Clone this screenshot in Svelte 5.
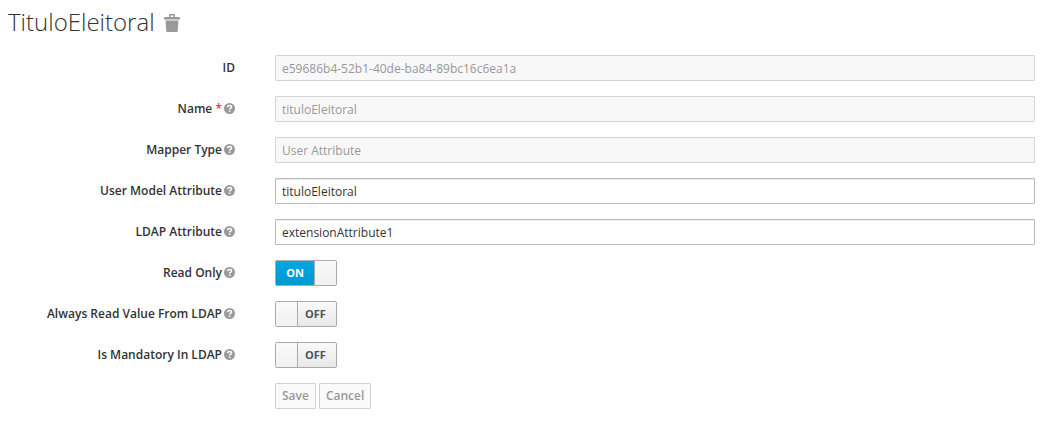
<script>
  const fields = [
    { id: 'mapper-id', label: 'ID', value: 'e59686b4-52b1-40de-ba84-89bc16c6ea1a', disabled: true },
    { id: 'name', label: 'Name', value: 'tituloEleitoral', disabled: true, required: true, help: true },
    { id: 'type', label: 'Mapper Type', value: 'User Attribute', disabled: true, help: true },
    { id: 'user-attribute', label: 'User Model Attribute', value: 'tituloEleitoral', help: true },
    { id: 'ldap-attribute', label: 'LDAP Attribute', value: 'extensionAttribute1', help: true }
  ];

  let switches = $state([
    { id: 'read-only', label: 'Read Only', on: true },
    { id: 'always-read', label: 'Always Read Value From LDAP', on: false },
    { id: 'mandatory', label: 'Is Mandatory In LDAP', on: false }
  ]);
</script>

{#snippet helpIcon()}
  <svg class="help" viewBox="0 0 22 22" aria-hidden="true">
    <circle cx="11" cy="11" r="11" fill="#999" />
    <path d="M7 8.300C7.200 5.900 8.800 4.800 11 4.800c2.300 0 4.100 1.300 4.100 3.300 0 2.700-3.900 2.700-3.900 5.100" fill="none" stroke="#fff" stroke-width="3" />
    <rect x="9.700" y="14.800" width="3" height="3" fill="#fff" />
  </svg>
{/snippet}

<main>
  <h1>
    TituloEleitoral
    <button class="trash" type="button" aria-label="Delete">
      <svg viewBox="0 0 16 18" aria-hidden="true">
        <path fill="#999" fill-rule="evenodd" d="M5 3V1q0-1 1-1h4q1 0 1 1v2h4q1 0 1 1v1.500H0V4q0-1 1-1zM6.500 1.500V3h3V1.500zM1.500 6.500h13l-.8 10.500q-.1 1-1 1H3.300q-.9 0-1-1z" />
      </svg>
    </button>
  </h1>

  <form onsubmit={(e) => e.preventDefault()}>
    {#each fields as f (f.id)}
      <div class="row">
        <div class="caption">
          <label for={f.id}>{f.label}{#if f.required}{' '}<span class="required">*</span>{/if}</label>
          {#if f.help}{@render helpIcon()}{/if}
        </div>
        <input class="text" id={f.id} type="text" value={f.value} disabled={f.disabled} />
      </div>
    {/each}

    {#each switches as s (s.id)}
      <div class="row">
        <div class="caption">
          <label for={s.id}>{s.label}</label>
          {@render helpIcon()}
        </div>
        <label class="switch" class:on={s.on}>
          <input id={s.id} type="checkbox" bind:checked={s.on} />
          {#if s.on}<span class="state">ON</span>{/if}
          <span class="knob"></span>
          {#if !s.on}<span class="state">OFF</span>{/if}
        </label>
      </div>
    {/each}

    <div class="row">
      <div></div>
      <div class="actions">
        <button class="btn" type="submit" disabled>Save</button>
        <button class="btn" type="button" disabled>Cancel</button>
      </div>
    </div>
  </form>
</main>

<style>
  :global(body) {
    margin: 0;
    background: #fff;
  }

  main {
    padding: 6px 11px 21px 8px;
    color: #333;
    font: 12px/16px "Open Sans", sans-serif;
  }

  h1 {
    display: flex;
    align-items: center;
    gap: 9px;
    margin: 0 0 17px;
    font-size: 24px;
    font-weight: 300;
    line-height: 32px;
  }

  .trash {
    display: flex;
    padding: 2px 0 0;
    border: 0;
    background: none;
    cursor: pointer;
  }

  .trash svg {
    width: 16px;
    height: 18px;
  }

  form {
    display: grid;
    gap: 15px;
  }

  .row {
    display: grid;
    grid-template-columns: 227px 1fr;
    column-gap: 40px;
    min-height: 26px;
  }

  .caption {
    display: flex;
    justify-content: flex-end;
    align-items: center;
    gap: 2px;
    font-weight: 600;
  }

  .required {
    color: #f00;
    font-weight: 400;
  }

  .help {
    width: 11px;
    height: 11px;
    padding-bottom: 1px;
  }

  .text {
    box-sizing: border-box;
    width: 100%;
    height: 26px;
    padding: 2px 6px;
    border: 1px solid #bababa;
    border-radius: 1px;
    background: #fff;
    box-shadow: inset 0 1px 1px rgba(0, 0, 0, 0.075);
    color: #333;
    font: inherit;
  }

  .text:disabled {
    border-color: #d4d4d4;
    background: #f8f8f8;
    box-shadow: none;
    color: #999;
  }

  .switch {
    display: flex;
    box-sizing: border-box;
    position: relative;
    justify-self: start;
    width: 62px;
    height: 26px;
    border: 1px solid #aaa;
    border-radius: 2px;
    background: linear-gradient(#fafafa, #e8e8e8);
    color: #4d5258;
    font-size: 11px;
    font-weight: 700;
    line-height: 24px;
    cursor: pointer;
  }

  .switch input {
    position: absolute;
    inset: 0;
    margin: 0;
    opacity: 0;
  }

  .knob {
    width: 21px;
    border-right: 1px solid #aaa;
    background: linear-gradient(#fafafa, #f0f0f0);
  }

  .state {
    flex: 1;
    padding-right: 3px;
    text-align: center;
  }

  .on .knob {
    border-right: 0;
    border-left: 1px solid #aaa;
  }

  .on .state {
    padding: 0;
    background: linear-gradient(#00a8e1, #0099d3);
    color: #fff;
  }

  .actions {
    display: flex;
    gap: 3px;
  }

  .btn {
    box-sizing: border-box;
    height: 26px;
    padding: 0 6px;
    border: 1px solid #d1d1d1;
    border-radius: 1px;
    background: #fafafa;
    color: #999;
    font: 600 12px/16px "Open Sans", sans-serif;
  }
</style>
